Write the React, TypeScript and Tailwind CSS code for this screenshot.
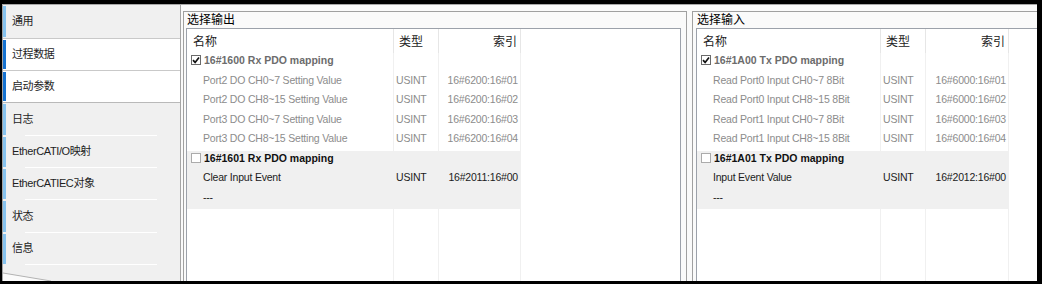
import React from 'react';

type Row = [string, string, string];
type Group = { title: string; checked: boolean; active: boolean; rows: Row[] };
type Cols = { name: string; type: string; index: string };

const OUTPUT_GROUPS: Group[] = [
  {
    title: '16#1600 Rx PDO mapping',
    checked: true,
    active: false,
    rows: [
      ['Port2 DO CH0~7 Setting Value', 'USINT', '16#6200:16#01'],
      ['Port2 DO CH8~15 Setting Value', 'USINT', '16#6200:16#02'],
      ['Port3 DO CH0~7 Setting Value', 'USINT', '16#6200:16#03'],
      ['Port3 DO CH8~15 Setting Value', 'USINT', '16#6200:16#04'],
    ],
  },
  {
    title: '16#1601 Rx PDO mapping',
    checked: false,
    active: true,
    rows: [
      ['Clear Input Event', 'USINT', '16#2011:16#00'],
      ['---', '', ''],
    ],
  },
];

const INPUT_GROUPS: Group[] = [
  {
    title: '16#1A00 Tx PDO mapping',
    checked: true,
    active: false,
    rows: [
      ['Read Port0 Input CH0~7 8Bit', 'USINT', '16#6000:16#01'],
      ['Read Port0 Input CH8~15 8Bit', 'USINT', '16#6000:16#02'],
      ['Read Port1 Input CH0~7 8Bit', 'USINT', '16#6000:16#03'],
      ['Read Port1 Input CH8~15 8Bit', 'USINT', '16#6000:16#04'],
    ],
  },
  {
    title: '16#1A01 Tx PDO mapping',
    checked: false,
    active: true,
    rows: [
      ['Input Event Value', 'USINT', '16#2012:16#00'],
      ['---', '', ''],
    ],
  },
];

const NAV: { label: string; h: string; state: 'idle' | 'selected' | 'focus'; sep: boolean }[] = [
  { label: '通用', h: 'h-[33px]', state: 'idle', sep: false },
  { label: '过程数据', h: 'h-[33px]', state: 'selected', sep: false },
  { label: '启动参数', h: 'h-[32px]', state: 'focus', sep: false },
  { label: '日志', h: 'h-[33px]', state: 'idle', sep: true },
  { label: 'EtherCATI/O映射', h: 'h-[32px]', state: 'idle', sep: true },
  { label: 'EtherCATIEC对象', h: 'h-[32px]', state: 'idle', sep: true },
  { label: '状态', h: 'h-[33px]', state: 'idle', sep: true },
  { label: '信息', h: 'h-[32px]', state: 'idle', sep: true },
];

const LEFT_COLS: Cols = { name: 'w-[207px]', type: 'w-[45px]', index: 'w-[82px]' };
const RIGHT_COLS: Cols = { name: 'w-[184px]', type: 'w-[45px]', index: 'w-[83px]' };

const CJK = "font-['Liberation_Sans','Noto_Sans_CJK_SC',sans-serif]";
const LATIN = "font-['Liberation_Sans',sans-serif]";

function Check({ on }: { on: boolean }) {
  return (
    <span
      className={`flex h-[10px] w-[10px] shrink-0 items-center justify-center border bg-white ${
        on ? 'border-[#6a6a6a]' : 'border-[#ababab]'
      }`}
    >
      {on && (
        <svg width="8" height="8" viewBox="0 0 8 8">
          <path d="M1 4.2 L3.1 6.4 L7 1.4" fill="none" stroke="#111" strokeWidth="1.7" />
        </svg>
      )}
    </span>
  );
}

function Cells({
  cols,
  shaded,
  line,
  name,
  type,
  index,
}: {
  cols: Cols;
  shaded?: boolean;
  line: string;
  name?: React.ReactNode;
  type?: React.ReactNode;
  index?: React.ReactNode;
}) {
  return (
    <div className={`flex ${shaded ? 'bg-[#f0f0f0]' : ''}`}>
      <div className={`${cols.name} shrink-0 border-r ${line}`}>{name}</div>
      <div className={`${cols.type} shrink-0 border-r ${line}`}>{type}</div>
      <div className={`${cols.index} shrink-0 border-r ${line}`}>{index}</div>
    </div>
  );
}

function MappingList({ groups, cols, open }: { groups: Group[]; cols: Cols; open?: boolean }) {
  const line = 'border-[#f0f0f0]';
  return (
    <div
      className={`flex min-h-0 flex-1 flex-col overflow-hidden border border-b-0 border-[#9ca1aa] bg-white ${
        open ? 'border-r-0' : ''
      }`}
    >
      <div className="flex h-[24px] shrink-0">
        <Cells
          cols={cols}
          line="border-[#e6e6e6]"
          name={<div className={`${CJK} pl-[6px] pt-[1px] text-[12px] leading-[24px] text-[#222]`}>名称</div>}
          type={<div className={`${CJK} pl-[5px] pt-[1px] text-[12px] leading-[24px] text-[#222]`}>类型</div>}
          index={<div className={`${CJK} pr-[3px] pt-[1px] text-right text-[12px] leading-[24px] text-[#222]`}>索引</div>}
        />
      </div>
      {groups.map((g) => {
        const tone = g.active ? 'text-[#1b1b1b]' : 'text-[#8c8c8c]';
        return (
          <div key={g.title} className={`${LATIN} text-[10.5px] tracking-[-0.2px]`}>
            <div className="flex h-[19.5px]">
              <Cells
                cols={cols}
                shaded={g.active}
                line={line}
                name={
                  <div className="flex h-[19.5px] items-start gap-[3px] pl-[4px] pt-[2px]">
                    <Check on={g.checked} />
                    <span
                      className={`-mt-[1px] font-bold leading-[13px] tracking-normal ${
                        g.active ? 'text-[#111]' : 'text-[#6c6c6c]'
                      }`}
                    >
                      {g.title}
                    </span>
                  </div>
                }
              />
            </div>
            {g.rows.map(([name, type, index]) => (
              <div key={name + index} className="flex h-[19.5px]">
                <Cells
                  cols={cols}
                  shaded={g.active}
                  line={line}
                  name={<div className={`h-[19.5px] pl-[16px] pt-[1px] leading-[13px] ${tone}`}>{name}</div>}
                  type={<div className={`h-[19.5px] pl-[2px] pt-[1px] leading-[13px] ${tone}`}>{type}</div>}
                  index={<div className={`h-[19.5px] pr-[2px] pt-[1px] text-right leading-[13px] ${tone}`}>{index}</div>}
                />
              </div>
            ))}
          </div>
        );
      })}
      <div className="flex min-h-0 flex-1">
        <Cells cols={cols} line={line} />
      </div>
    </div>
  );
}

function Sidebar() {
  return (
    <div className="flex w-[179px] shrink-0 flex-col border-x border-[#a5a5a5] bg-[#f0f0f0]">
      {NAV.map((item) => {
        const white = item.state !== 'idle';
        return (
          <div
            key={item.label}
            className={`flex ${item.h} shrink-0 ${
              item.state === 'selected'
                ? 'border-y border-[#c9c9c9] bg-white'
                : item.state === 'focus'
                  ? 'border-b border-[#b9b9b9] bg-white'
                  : ''
            }`}
          >
            <div className={`my-[1px] w-[3px] shrink-0 ${white ? 'bg-[#1673d1]' : 'bg-[#86c3ef]'}`} />
            <div className="flex flex-1 flex-col">
              <div className={`${CJK} flex flex-1 items-center pl-[6px] text-[11px] tracking-[-0.4px] text-[#1e1e1e]`}>
                {item.label}
              </div>
              {item.sep && <div className="ml-[19px] h-px w-[132px] bg-white" />}
            </div>
          </div>
        );
      })}
      <div className="flex-1">
        <svg width="177" height="16" viewBox="0 0 177 16" className="block">
          <polygon points="0,8 48,16 0,16" fill="#fbfbfb" />
          <line x1="0" y1="8" x2="48" y2="16" stroke="#b2b2b2" strokeWidth="1" />
        </svg>
      </div>
    </div>
  );
}

export default function App() {
  return (
    <div className="flex h-[284px] w-[1042px] flex-col bg-black pb-[3px] pl-[2px] pr-[5px] pt-[4px]">
      <div className="flex min-h-0 flex-1 overflow-hidden border-t border-[#a8a8a8] bg-[#fafafa]">
        <Sidebar />
        <div className="flex min-w-0 flex-1 gap-[5px] overflow-hidden pl-[2px] pt-[6px]">
          <div className="flex w-[504px] shrink-0 flex-col border border-b-0 border-[#a0a0a0]">
            <div className={`${CJK} h-[16px] shrink-0 pl-[3px] text-[12px] leading-[16px] text-black`}>选择输出</div>
            <div className="ml-[2px] mr-[5px] flex min-h-0 flex-1">
              <MappingList groups={OUTPUT_GROUPS} cols={LEFT_COLS} />
            </div>
          </div>
          <div className="flex min-w-0 flex-1 flex-col border-l border-t border-[#a0a0a0]">
            <div className={`${CJK} h-[16px] shrink-0 pl-[4px] text-[12px] leading-[16px] text-black`}>选择输入</div>
            <div className="ml-[3px] flex min-h-0 flex-1">
              <MappingList groups={INPUT_GROUPS} cols={RIGHT_COLS} open />
            </div>
          </div>
        </div>
      </div>
    </div>
  );
}
